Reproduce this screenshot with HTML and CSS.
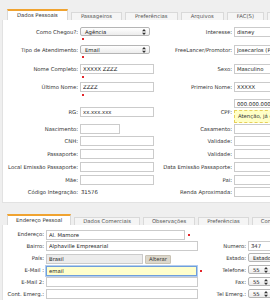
FILE: index.html
```html
<!DOCTYPE html>
<html lang="pt-BR">
<head>
    <meta charset="UTF-8">
    <meta name="viewport" content="width=device-width, initial-scale=1.0">
    <title>Cadastro de Cliente</title>
    <link rel="stylesheet" href="styles.css">
</head>
<body>
<div class="page">

    <!-- dados pessoais -->
    <div class="panel">
        <ul class="tabs">
            <li class="tab active">Dados Pessoais</li>
            <li class="tab">Passageiros</li>
            <li class="tab">Preferências</li>
            <li class="tab">Arquivos</li>
            <li class="tab">FAC(S)</li>
            <li class="tab">&nbsp;&nbsp;&nbsp;&nbsp;</li>
        </ul>
        <div class="body form personal">
            <label class="lbl">Como Chegou?:</label>
            <div class="cell">
                <div class="select sel-70"><span>Agência</span>
                    <svg width="4" height="6" viewBox="0 0 4 6"><path d="M2 0L4 2.3H0Z M2 6L4 3.7H0Z" fill="#333"/></svg>
                </div>
                <i class="req"></i>
            </div>
            <label class="lbl">Interesse:</label>
            <div class="cell"><input class="field" type="text" value="disney"></div>

            <label class="lbl">Tipo de Atendimento:</label>
            <div class="cell">
                <div class="select sel-70"><span>Email</span>
                    <svg width="4" height="6" viewBox="0 0 4 6"><path d="M2 0L4 2.3H0Z M2 6L4 3.7H0Z" fill="#333"/></svg>
                </div>
                <i class="req"></i>
            </div>
            <label class="lbl">FreeLancer/Promotor:</label>
            <div class="cell"><input class="field" type="text" value="Josecarlos (Promotor)"></div>

            <label class="lbl">Nome Completo:</label>
            <div class="cell"><input class="field" type="text" value="XXXXX ZZZZ"><i class="req"></i></div>
            <label class="lbl">Sexo:</label>
            <div class="cell"><input class="field" type="text" value="Masculino"></div>

            <label class="lbl">Último Nome:</label>
            <div class="cell"><input class="field" type="text" value="ZZZZ"><i class="req"></i></div>
            <label class="lbl">Primeiro Nome:</label>
            <div class="cell"><input class="field" type="text" value="XXXXX"></div>

            <label class="lbl off">RG:</label>
            <div class="cell off"><input class="field" type="text" value="xx.xxx.xxx"></div>
            <label class="lbl off">CPF:</label>
            <div class="cell">
                <input class="field short-h" type="text" value="000.000.000-00">
                <div class="tip">Atenção, já existe um cliente com este CPF</div>
            </div>

            <label class="lbl">Nascimento:</label>
            <div class="cell"><input class="field w-40" type="text"></div>
            <label class="lbl">Casamento:</label>
            <div class="cell"><input class="field" type="text"></div>

            <label class="lbl">CNH:</label>
            <div class="cell"><input class="field" type="text"></div>
            <label class="lbl">Validade:</label>
            <div class="cell"><input class="field" type="text"></div>

            <label class="lbl">Passaporte:</label>
            <div class="cell"><input class="field" type="text"></div>
            <label class="lbl">Validade:</label>
            <div class="cell"><input class="field" type="text"></div>

            <label class="lbl">Local Emissão Passaporte:</label>
            <div class="cell"><input class="field" type="text"></div>
            <label class="lbl">Data Emissão Passaporte:</label>
            <div class="cell"><input class="field" type="text"></div>

            <label class="lbl">Mãe:</label>
            <div class="cell"><input class="field" type="text"></div>
            <label class="lbl">Pai:</label>
            <div class="cell"><input class="field" type="text"></div>

            <label class="lbl">Código Integração:</label>
            <div class="cell"><span class="value">31576</span></div>
            <label class="lbl">Renda Aproximada:</label>
            <div class="cell"><input class="field" type="text"></div>
        </div>
    </div>

    <!-- endereco -->
    <div class="panel second">
        <ul class="tabs">
            <li class="tab active">Endereço Pessoal</li>
            <li class="tab">Dados Comerciais</li>
            <li class="tab">Observações</li>
            <li class="tab">Preferências</li>
            <li class="tab">Contatos</li>
        </ul>
        <div class="body form address">
            <label class="lbl">Endereço:</label>
            <div class="cell row"><input class="field w-139" type="text" value="Al. Mamore"><i class="req side"></i></div>
            <span></span>
            <span></span>

            <label class="lbl">Bairro:</label>
            <div class="cell"><input class="field w-152" type="text" value="Alphaville Empresarial"></div>
            <label class="lbl">Numero:</label>
            <div class="cell"><input class="field" type="text" value="347"></div>

            <label class="lbl">País:</label>
            <div class="cell row">
                <input class="field w-97 locked" type="text" value="Brasil" readonly>
                <button class="btn">Alterar</button>
            </div>
            <label class="lbl">Estado:</label>
            <div class="cell">
                <div class="select"><span>Estado</span>
                    <svg width="4" height="6" viewBox="0 0 4 6"><path d="M2 0L4 2.3H0Z M2 6L4 3.7H0Z" fill="#333"/></svg>
                </div>
            </div>

            <label class="lbl">E-Mail :</label>
            <div class="cell row"><input class="field w-152 focus" type="text" value="email"><i class="req side"></i></div>
            <label class="lbl">Telefone:</label>
            <div class="cell">
                <div class="select sel-24"><span>55</span>
                    <svg width="4" height="6" viewBox="0 0 4 6"><path d="M2 0L4 2.3H0Z M2 6L4 3.7H0Z" fill="#333"/></svg>
                </div>
            </div>

            <label class="lbl">E-Mail 2:</label>
            <div class="cell"><input class="field w-152" type="text"></div>
            <label class="lbl">Fax:</label>
            <div class="cell">
                <div class="select sel-24"><span>55</span>
                    <svg width="4" height="6" viewBox="0 0 4 6"><path d="M2 0L4 2.3H0Z M2 6L4 3.7H0Z" fill="#333"/></svg>
                </div>
            </div>

            <label class="lbl">Cont. Emerg.:</label>
            <div class="cell"><input class="field w-152" type="text"></div>
            <label class="lbl">Tel Emerg.:</label>
            <div class="cell">
                <div class="select sel-24"><span>55</span>
                    <svg width="4" height="6" viewBox="0 0 4 6"><path d="M2 0L4 2.3H0Z M2 6L4 3.7H0Z" fill="#333"/></svg>
                </div>
            </div>
        </div>
    </div>

</div>
</body>
</html>
```

FILE: styles.css
```css
* {
    box-sizing: border-box;
}
body {
    margin: 0;
    background-color: #efefef;
    font-family: "DejaVu Sans", Verdana, sans-serif;
    font-size: 5.3px;
    color: #333;
    overflow: hidden;
}
.page {
    width: 310px;
    padding-top: 9px;
}
.panel {
    margin-left: 2px;
}
.panel.second {
    margin-top: 11px;
}

/* abas */
.tabs {
    list-style: none;
    margin: 0 0 0 5px;
    padding: 0;
    display: flex;
    align-items: flex-end;
    gap: 3px;
    height: 11px;
}
.tab {
    height: 8px;
    line-height: 7px;
    padding: 0 9px;
    border: 1px solid #d9d9d9;
    border-bottom: none;
    background-color: #f5f5f5;
    color: #555;
    white-space: nowrap;
}
.second .tab {
    padding: 0 8px;
}
.tab.active {
    height: 11px;
    line-height: 9px;
    border-top: 2px solid #f0a330;
    background-color: #fff;
    color: #333;
}
.body {
    background-color: #fff;
    border: 1px solid #e2e2e2;
    border-top: none;
}

/* formularios */
.form {
    display: grid;
    column-gap: 2px;
}
.personal {
    grid-template-columns: 75px 74px 76px 1fr;
    grid-template-rows: 18px 19px 18px 17px 25px 12px 13px 13px 13px 12px 11px;
    padding: 7px 0 4px;
}
.address {
    grid-template-columns: 41px 156px 42px 1fr;
    grid-auto-rows: 12px;
    padding: 4px 0 2px;
}
.lbl {
    display: flex;
    justify-content: flex-end;
    align-items: center;
    height: 10px;
    white-space: nowrap;
    color: #333;
}
.off {
    margin-top: 8px;
}
.cell {
    min-width: 0;
}
.cell.row {
    display: flex;
    align-items: center;
}
.field {
    display: block;
    width: 100%;
    height: 10px;
    margin: 0;
    padding: 0 2px;
    border: 1px solid #cbcbcb;
    border-radius: 0;
    background-color: #fff;
    font: inherit;
    color: #222;
    outline: none;
}
.short-h {
    height: 9px;
}
.w-40 { width: 40px; }
.w-97 { width: 97px; }
.w-139 { width: 139px; }
.w-152 { width: 152px; }
.locked {
    background-color: #ececec;
}
.focus {
    background-color: #ffffcc;
    border-color: #6f9fdc;
    box-shadow: 0 0 0 1px #b3cdef;
}
.value {
    display: flex;
    align-items: center;
    height: 10px;
    padding-left: 1px;
    color: #222;
}
.select {
    display: flex;
    align-items: center;
    justify-content: space-between;
    height: 9px;
    padding: 0 3px 0 4px;
    border: 1px solid #b5b5b5;
    border-radius: 2px;
    background: linear-gradient(#ffffff, #ececec);
    color: #222;
    white-space: nowrap;
}
.sel-70 { width: 70px; }
.sel-24 { width: 24px; }
.req {
    display: block;
    width: 2px;
    height: 2px;
    margin: 2px 0 0 2px;
    background-color: #e3262b;
}
.req.side {
    margin: 0 0 0 3px;
}
.tip {
    margin-top: 2px;
    height: 13px;
    line-height: 11px;
    padding: 0 3px;
    border: 1px dashed #e6cf5a;
    background-color: #ffffc6;
    color: #333;
    white-space: nowrap;
    overflow: hidden;
}
.btn {
    height: 9px;
    margin-left: 2px;
    padding: 0 3px;
    border: 1px solid #c9c3b5;
    border-radius: 1px;
    background-color: #dcd7cb;
    font: inherit;
    line-height: 7px;
    color: #333;
}
```
